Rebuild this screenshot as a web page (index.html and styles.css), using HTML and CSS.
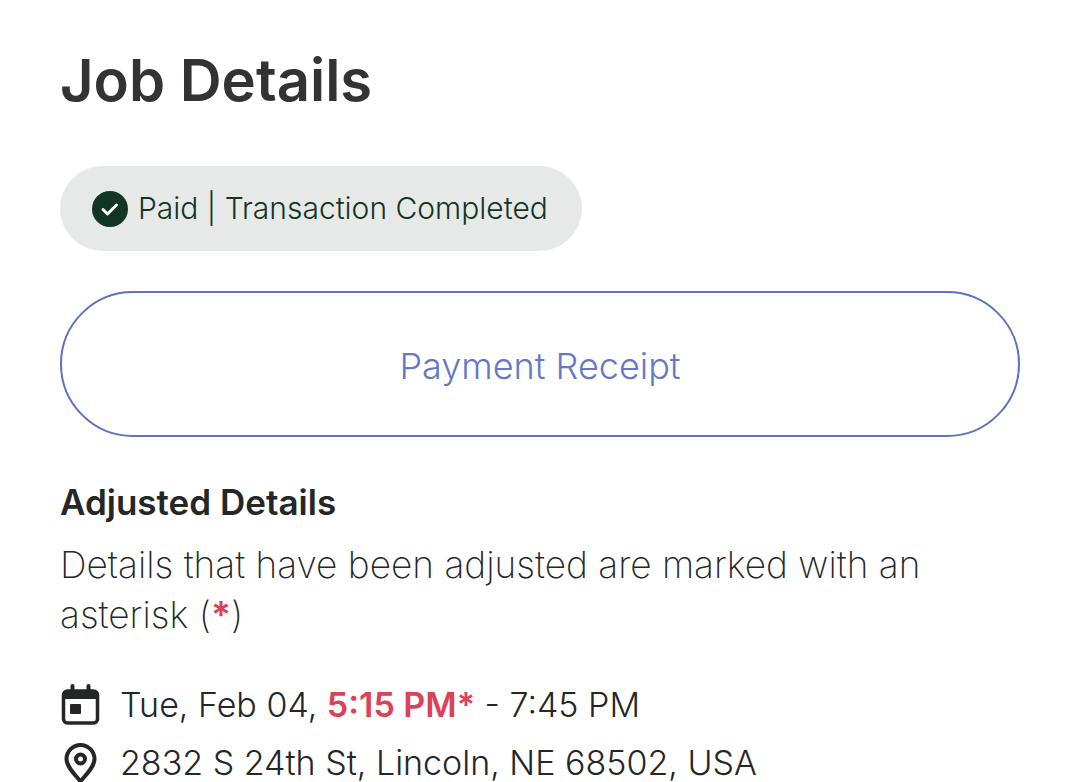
FILE: index.html
```html
<!DOCTYPE html>
<html lang="en">
<head>
    <meta charset="UTF-8">
    <meta name="viewport" content="width=device-width, initial-scale=1.0">
    <title>Job Details</title>
    <link rel="stylesheet" href="styles.css">
</head>
<body>
    <main class="job">
        <h1 class="title">Job Details</h1>
        <div class="status">
            <svg class="status-icon" viewBox="0 0 36 36" aria-hidden="true">
                <circle cx="18" cy="18" r="18" fill="#123524"/>
                <path d="M11 18.5l4.5 4.5 9-9" fill="none" stroke="#fff" stroke-width="3" stroke-linecap="round" stroke-linejoin="round"/>
            </svg>
            <span>Paid | Transaction Completed</span>
        </div>
        <button class="receipt" type="button">Payment Receipt</button>
        <section class="adjusted">
            <h2 class="subtitle">Adjusted Details</h2>
            <p class="note">Details that have been adjusted are marked with an asterisk (<span class="mark">*</span>)</p>
        </section>
        <ul class="info">
            <li class="row">
                <svg class="row-icon" viewBox="0 0 40 42" aria-hidden="true">
                    <path d="M12.5 6V2M28.5 6V2" stroke="#252626" stroke-width="4" stroke-linecap="round"/>
                    <rect x="3.5" y="7" width="34" height="32" rx="4" fill="none" stroke="#252626" stroke-width="3.5"/>
                    <path d="M3 7h35v8H3z" fill="#252626"/>
                    <rect x="10" y="20" width="11" height="10" rx="1" fill="#252626"/>
                </svg>
                <span>Tue, Feb 04, <strong class="changed">5:15 PM*</strong> - 7:45 PM</span>
            </li>
            <li class="row">
                <svg class="row-icon" viewBox="0 0 40 42" aria-hidden="true">
                    <path d="M20.5 39.5C15.5 33 6.5 25 6.5 17a14 14 0 0 1 28 0c0 8-9 16-14 22.5z" fill="none" stroke="#252626" stroke-width="4" stroke-linejoin="round"/>
                    <circle cx="20.5" cy="17" r="4.5" fill="none" stroke="#252626" stroke-width="4"/>
                </svg>
                <span>2832 S 24th St, Lincoln, NE 68502, USA</span>
            </li>
        </ul>
    </main>
</body>
</html>
```
FILE: styles.css
```css
* {
    box-sizing: border-box;
}
body {
    margin: 0;
    background-color: #fff;
    color: #252626;
    font-family: "Inter", "Liberation Sans", sans-serif;
    overflow: hidden;
}
.job {
    padding: 44px 60px 0;
}
.title {
    margin: 0;
    font-size: 58px;
    line-height: 72px;
    font-weight: 600;
    color: #333;
}
.status {
    display: flex;
    align-items: center;
    gap: 10px;
    width: fit-content;
    margin-top: 50px;
    padding: 20px 34px 20px 32px;
    border-radius: 44px;
    background-color: #e7e9e8;
    color: #123524;
    font-size: 30px;
    line-height: 45px;
    font-weight: 300;
}
.status-icon {
    width: 36px;
    height: 36px;
}
.receipt {
    display: block;
    width: 100%;
    margin-top: 40px;
    padding: 51px 20px 47px;
    border: 2px solid #5e72c4;
    border-radius: 74px;
    background-color: #fff;
    color: #6578c8;
    font-family: inherit;
    font-size: 36px;
    line-height: 44px;
    font-weight: 300;
}
.adjusted {
    margin-top: 40px;
}
.subtitle {
    margin: 0;
    font-size: 35px;
    line-height: 50px;
    font-weight: 600;
}
.note {
    margin: 13px 0 0;
    font-size: 37px;
    line-height: 50px;
    font-weight: 200;
}
.mark,
.changed {
    color: #dc4158;
    font-weight: 600;
}
.info {
    margin: 36px 0 0;
    padding: 0;
    list-style: none;
}
.row {
    display: flex;
    align-items: center;
    gap: 20px;
    font-size: 34px;
    line-height: 58px;
    font-weight: 300;
}
.row-icon {
    width: 40px;
    height: 42px;
}
```
